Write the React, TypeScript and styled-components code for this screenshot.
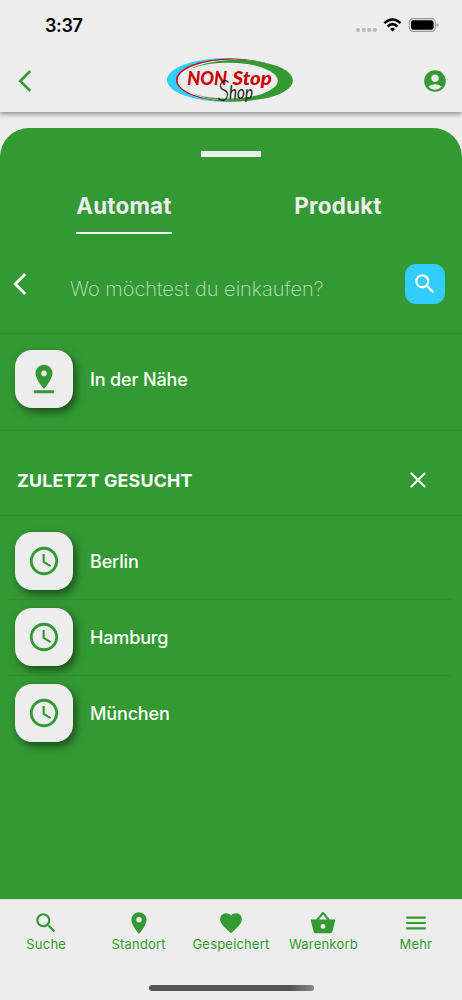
import React from "react";
import styled, { createGlobalStyle } from "styled-components";
import {
  MdAccessTime,
  MdAccountCircle,
  MdFavorite,
  MdLocationOn,
  MdMenu,
  MdPinDrop,
  MdSearch,
} from "react-icons/md";

const green = "#339933";
const paper = "#ededed";
const blue = "#33ccff";
const red = "#cc0000";

const GlobalStyle = createGlobalStyle`
  *, *::before, *::after { box-sizing: border-box; }
  body { margin: 0; background: ${paper}; }
  button { border: 0; padding: 0; background: none; font: inherit; color: inherit; }
  svg { display: block; flex: none; }
`;

const Screen = styled.div`
  display: flex;
  flex-direction: column;
  width: 462px;
  height: 1000px;
  overflow: hidden;
  background: ${paper};
  font-family: Inter, "Liberation Sans", sans-serif;
  white-space: nowrap;
`;

const Header = styled.header`
  flex: none;
  height: 112px;
  background: ${paper};
  box-shadow: 0 2px 5px rgba(0, 0, 0, 0.42);
`;

const StatusBar = styled.div`
  display: flex;
  align-items: center;
  justify-content: space-between;
  height: 50px;
  padding: 2px 23px 0 45px;
`;

const Time = styled.span`
  font-size: 18px;
  font-weight: 600;
  line-height: 22px;
  letter-spacing: -0.4px;
  color: #000;
`;

const TopBar = styled.div`
  display: flex;
  align-items: center;
  justify-content: space-between;
  height: 62px;
  padding: 0 14px 0 14px;
  color: ${green};
`;

const IconButton = styled.button`
  display: flex;
  align-items: center;
  justify-content: center;
`;

const Sheet = styled.main`
  flex: 1;
  display: flex;
  flex-direction: column;
  margin-top: 16px;
  padding-top: 23px;
  border-radius: 29px 29px 0 0;
  background: ${green};
  color: #fff;
`;

const Handle = styled.div`
  flex: none;
  align-self: center;
  width: 60px;
  height: 6px;
  background: ${paper};
`;

const Tabs = styled.div`
  display: flex;
  justify-content: space-around;
  height: 77px;
  margin: 0 17px;
  padding-top: 31px;
`;

const TabSlot = styled.div`
  flex: 1;
  display: flex;
  justify-content: center;
`;

const Tab = styled.button<{ $active?: boolean }>`
  height: 46px;
  padding: 0 0 10px;
  border-bottom: 2px solid ${(p) => (p.$active ? "#fff" : "transparent")};
  color: ${paper};
  font-size: 22.4px;
  font-weight: 700;
  letter-spacing: 0.2px;
`;

const SearchRow = styled.div`
  display: flex;
  align-items: center;
  height: 100px;
  padding: 0 17px 0 9px;
  border-bottom: 1px solid rgba(0, 0, 0, 0.06);
`;

const Placeholder = styled.div`
  flex: 1;
  padding: 10px 0 0 39px;
  font-size: 20px;
  font-weight: 200;
  color: rgba(255, 255, 255, 0.72);
`;

const SearchButton = styled(IconButton)`
  width: 40px;
  height: 40px;
  border-radius: 11px;
  background: ${blue};
`;

const ListRow = styled.div<{ $height: number; $lift: number; $inset?: boolean; $line?: boolean }>`
  display: flex;
  align-items: center;
  gap: 17px;
  height: ${(p) => p.$height}px;
  margin: 0 ${(p) => (p.$inset ? 9 : 0)}px;
  padding-left: ${(p) => (p.$inset ? 6 : 15)}px;
  padding-bottom: ${(p) => p.$lift}px;
  border-bottom: 1px solid ${(p) => (p.$line ? "rgba(0, 0, 0, 0.05)" : "transparent")};
`;

const Tile = styled.div`
  display: flex;
  align-items: center;
  justify-content: center;
  width: 58px;
  height: 58px;
  border-radius: 17px;
  background: ${paper};
  color: ${green};
  box-shadow: 3px 4px 9px rgba(0, 0, 0, 0.5);
`;

const Label = styled.span`
  padding-top: 2px;
  font-size: 18px;
  font-weight: 500;
  line-height: 24px;
  letter-spacing: -0.15px;
`;

const SectionHead = styled.div`
  display: flex;
  align-items: center;
  justify-content: space-between;
  height: 85px;
  padding: 14px 35px 0 17px;
  border-bottom: 1px solid rgba(0, 0, 0, 0.05);
`;

const SectionTitle = styled.h2`
  margin: 0;
  padding-top: 1px;
  font-size: 17.8px;
  font-weight: 650;
  line-height: 24px;
  letter-spacing: 0.2px;
`;

const RecentList = styled.div`
  padding-top: 8px;
`;

const BottomNav = styled.nav`
  flex: none;
  display: flex;
  flex-direction: column;
  align-items: center;
  height: 101px;
  border-top: 1px solid #d4e2d4;
  background: ${paper};
  color: ${green};
`;

const NavItems = styled.div`
  display: flex;
  width: 100%;
  height: 85px;
`;

const NavItem = styled.div`
  flex: 1;
  display: flex;
  flex-direction: column;
  align-items: center;
  padding-top: 10px;
`;

const NavLabel = styled.span`
  font-size: 13px;
  line-height: 16px;
  letter-spacing: 0.2px;
`;

const HomeIndicator = styled.div`
  width: 165px;
  height: 6px;
  border-radius: 3px;
  background: linear-gradient(90deg, #555 0%, #555 85%, #888 100%);
`;

function StatusIcons() {
  return (
    <svg width="84" height="20" viewBox="0 0 84 20">
      <g fill="#bdbdbd">
        {[1, 6.7, 12.3, 17.8].map((x) => (
          <rect key={x} x={x} y="12" width="4" height="4" rx="1.4" />
        ))}
      </g>
      <g fill="none" stroke="#000" strokeWidth="2.6">
        <path d="M29.4 7.1Q37.5 -0.1 45.6 7.1" />
        <path d="M32.5 10.4Q37.5 6 42.5 10.4" />
      </g>
      <path d="M35 12.9Q37.5 10.7 40 12.9L37.5 15.4Z" fill="#000" />
      <rect x="54.3" y="2.6" width="26" height="12.8" rx="3.8" fill="none" stroke="#999" strokeWidth="1.1" />
      <rect x="56" y="4.3" width="22.6" height="9.4" rx="2.2" fill="#000" />
      <path d="M81.7 6.9Q83.6 7.6 83.6 9T81.7 11.1Z" fill="#999" />
    </svg>
  );
}

function Chevron({ width = 2.5 }: { width?: number }) {
  return (
    <svg width="22" height="24" viewBox="0 0 22 24" fill="none" stroke="currentColor" strokeWidth={width}>
      <path d="M16.2 2L6.2 12L16.2 22" />
    </svg>
  );
}

function Logo() {
  return (
    <svg width="148" height="62" viewBox="0 0 148 62">
      <ellipse cx="72" cy="30" rx="60" ry="22" fill={blue} />
      <ellipse cx="76" cy="30" rx="55" ry="21.4" fill={red} />
      <ellipse cx="79" cy="30.3" rx="56.4" ry="20.9" fill={paper} />
      <ellipse cx="82" cy="30.5" rx="55.8" ry="20.7" fill={green} />
      <ellipse cx="73" cy="30.7" rx="49.7" ry="18" fill={paper} />
      <g
        fontFamily="Lato, 'Open Sans', sans-serif"
        fontWeight="900"
        fontStyle="italic"
        fontSize="19.6"
        fill={red}
      >
        <text x="32.2" y="35.2" textLength="40" lengthAdjust="spacingAndGlyphs">NON</text>
        <text x="77.5" y="35.2" textLength="39.5" lengthAdjust="spacingAndGlyphs">Stop</text>
      </g>
      <g fontFamily="Lato, sans-serif" fontStyle="italic" fill="#222">
        <text x="62.5" y="51" fontSize="30" fontWeight="300" textLength="12" lengthAdjust="spacingAndGlyphs">S</text>
        <text x="74" y="49" fontSize="19" fontWeight="400" textLength="24" lengthAdjust="spacingAndGlyphs">hop</text>
      </g>
    </svg>
  );
}

function BasketIcon() {
  return (
    <svg width="26" height="26" viewBox="0 0 26 26">
      <path d="M6.6 10.5L13 3L19.4 10.5" fill="none" stroke="currentColor" strokeWidth="2" strokeLinejoin="round" />
      <path
        fill="currentColor"
        fillRule="evenodd"
        d="M1.4 9.6H24.6C25.1 9.6 25.3 10 25.2 10.4L22.5 21.3C22.2 22.6 21.5 23.2 20.4 23.2H5.6C4.5 23.2 3.8 22.6 3.5 21.3L.8 10.4C.7 10 .9 9.6 1.4 9.6ZM13 14A2.4 2.4 0 1 0 13 18.8A2.4 2.4 0 1 0 13 14Z"
      />
    </svg>
  );
}

function CloseIcon() {
  return (
    <svg width="18" height="18" viewBox="0 0 18 18" stroke="#fff" strokeWidth="2.1" strokeLinecap="round">
      <path d="M2.4 2.4L15.6 15.6M15.6 2.4L2.4 15.6" />
    </svg>
  );
}

const recent = ["Berlin", "Hamburg", "München"];

const navItems = [
  { label: "Suche", icon: <MdSearch size={26} /> },
  { label: "Standort", icon: <MdLocationOn size={26} /> },
  { label: "Gespeichert", icon: <MdFavorite size={26} /> },
  { label: "Warenkorb", icon: <BasketIcon /> },
  { label: "Mehr", icon: <MdMenu size={26} /> },
];

export default function App() {
  return (
    <Screen>
      <GlobalStyle />
      <Header>
        <StatusBar>
          <Time>3:37</Time>
          <StatusIcons />
        </StatusBar>
        <TopBar>
          <IconButton aria-label="Zurück">
            <Chevron />
          </IconButton>
          <Logo />
          <IconButton aria-label="Konto">
            <MdAccountCircle size={26} />
          </IconButton>
        </TopBar>
      </Header>

      <Sheet>
        <Handle />
        <Tabs>
          <TabSlot>
            <Tab $active>Automat</Tab>
          </TabSlot>
          <TabSlot>
            <Tab>Produkt</Tab>
          </TabSlot>
        </Tabs>
        <SearchRow>
          <IconButton aria-label="Zurück">
            <Chevron width={2.8} />
          </IconButton>
          <Placeholder>Wo möchtest du einkaufen?</Placeholder>
          <SearchButton aria-label="Suchen">
            <MdSearch size={26} />
          </SearchButton>
        </SearchRow>
        <ListRow $height={97} $lift={6} $line>
          <Tile>
            <MdPinDrop size={34} />
          </Tile>
          <Label>In der Nähe</Label>
        </ListRow>
        <SectionHead>
          <SectionTitle>ZULETZT GESUCHT</SectionTitle>
          <IconButton aria-label="Verlauf löschen">
            <CloseIcon />
          </IconButton>
        </SectionHead>
        <RecentList>
          {recent.map((city, i) => (
            <ListRow key={city} $height={76} $lift={1} $inset $line={i < recent.length - 1}>
              <Tile>
                <MdAccessTime size={34} />
              </Tile>
              <Label>{city}</Label>
            </ListRow>
          ))}
        </RecentList>
      </Sheet>

      <BottomNav>
        <NavItems>
          {navItems.map((item) => (
            <NavItem key={item.label}>
              {item.icon}
              <NavLabel>{item.label}</NavLabel>
            </NavItem>
          ))}
        </NavItems>
        <HomeIndicator />
      </BottomNav>
    </Screen>
  );
}
